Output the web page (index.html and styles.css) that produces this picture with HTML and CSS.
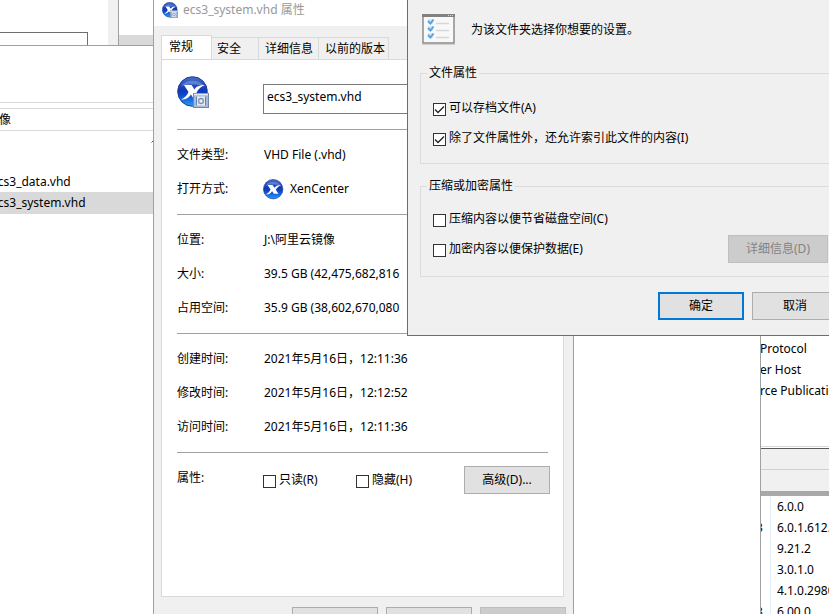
FILE: index.html
```html
<!DOCTYPE html>
<html lang="zh-CN">
<head>
  <meta charset="UTF-8" />
  <meta name="viewport" content="width=device-width, initial-scale=1.0"/>
  <title>ecs3_system.vhd 属性</title>
  <link rel="stylesheet" href="styles.css">
</head>
<body>
  <svg width="0" height="0" class="defs" aria-hidden="true">
    <defs>
      <linearGradient id="ball" x1="0" y1="0" x2="0" y2="1">
        <stop offset="0" stop-color="#4a6fc8"/>
        <stop offset="0.45" stop-color="#1238b4"/>
        <stop offset="0.6" stop-color="#0c46cc"/>
        <stop offset="1" stop-color="#2b9cf4"/>
      </linearGradient>
      <symbol id="xen" viewBox="0 0 32 32">
        <circle cx="15.500" cy="15.500" r="14.800" fill="url(#ball)" stroke="#1c3c94" stroke-width="1"/>
        <path d="M4 10C9 3 22 3 27 10C20 8 11 8 4 10Z" fill="#7d9be0" opacity="0.6"/>
        <path d="M7 9h7.500l3 4.500C19 10.500 22 9 28 9c-4 1.500-6.500 4-8.500 7.500l4 6h-7l-2.500-4c-2 3-5 5-10 5c3.500-1.500 6-4 7.500-7.500z" fill="#fff"/>
      </symbol>
      <symbol id="xen-disk" viewBox="0 0 32 32">
        <use href="#xen" width="32" height="32"/>
        <rect x="16.500" y="17.500" width="15" height="14" fill="#a9bad8" stroke="#7386ad"/>
        <path d="M17 18.500h14" stroke="#e4ecf8" stroke-width="1.500"/>
        <rect x="19" y="20.500" width="10" height="9" fill="#e6edf7"/>
        <path d="M19.500 20.500v9M28.500 20.500v9" stroke="#5f84b8"/>
        <circle cx="24" cy="25" r="2.500" fill="none" stroke="#7d8ea8" stroke-width="1.300"/>
        <path d="M22 22v6M26 22v6" stroke="#a5b2c6" stroke-width="0.800"/>
      </symbol>
    </defs>
  </svg>

  <div class="desktop">
    <!-- windows at the back -->
    <div class="window back">
      <div class="back-pane"><div class="back-box"></div></div>
      <div class="back-strip"></div>
      <div class="back-list"></div>
    </div>

    <div class="window services">
      <ul class="service-list">
        <li>Protocol</li>
        <li>er Host</li>
        <li>rce Publication</li>
      </ul>
      <div class="status-bar"></div>
      <div class="tool-bar"></div>
      <table class="versions">
        <tr><td></td><td>6.0.0</td></tr>
        <tr><td>3</td><td>6.0.1.612.0</td></tr>
        <tr><td></td><td>9.21.2</td></tr>
        <tr><td></td><td>3.0.1.0</td></tr>
        <tr><td></td><td>4.1.0.2980</td></tr>
        <tr><td>3</td><td>6.00.0</td></tr>
      </table>
    </div>

    <div class="window explorer">
      <div class="ribbon"></div>
      <div class="address">阿里云镜像</div>
      <div class="list-head">
        <svg width="10" height="6" viewBox="0 0 10 6"><path d="M0.500 5.500L5 1L9.500 5.500" fill="none" stroke="#555"/></svg>
      </div>
      <ul class="files">
        <li>ecs3_data.vhd</li>
        <li class="selected">ecs3_system.vhd</li>
      </ul>
    </div>

    <!-- file properties -->
    <div class="window properties">
      <div class="title-bar">
        <svg width="16" height="16"><use href="#xen-disk" width="16" height="16"/></svg>
        <span>ecs3_system.vhd 属性</span>
      </div>
      <div class="tabs">
        <button class="tab active">常规</button>
        <button class="tab short">安全</button>
        <button class="tab">详细信息</button>
        <button class="tab">以前的版本</button>
      </div>
      <div class="panel">
        <div class="file-head">
          <svg width="32" height="32"><use href="#xen-disk" width="32" height="32"/></svg>
          <input type="text" class="file-name" aria-label="文件名" value="ecs3_system.vhd">
        </div>
        <dl class="rows">
          <dt>文件类型:</dt><dd>VHD File (.vhd)</dd>
          <dt>打开方式:</dt>
          <dd class="app"><svg width="21" height="21"><use href="#xen" width="21" height="21"/></svg>XenCenter</dd>
        </dl>
        <dl class="rows">
          <dt>位置:</dt><dd>J:\阿里云镜像</dd>
          <dt>大小:</dt><dd>39.5 GB (42,475,682,816</dd>
          <dt>占用空间:</dt><dd>35.9 GB (38,602,670,080</dd>
        </dl>
        <dl class="rows last">
          <dt>创建时间:</dt><dd>2021年5月16日，12:11:36</dd>
          <dt>修改时间:</dt><dd>2021年5月16日，12:12:52</dd>
          <dt>访问时间:</dt><dd>2021年5月16日，12:11:36</dd>
        </dl>
        <div class="attributes">
          <span class="attr-title">属性:</span>
          <label class="check"><input type="checkbox">只读(R)</label>
          <label class="check"><input type="checkbox">隐藏(H)</label>
          <button class="btn">高级(D)...</button>
        </div>
      </div>
      <div class="footer">
        <button class="btn" aria-label="确定"></button>
        <button class="btn" aria-label="取消"></button>
        <button class="btn" aria-label="应用" disabled></button>
      </div>
    </div>

    <!-- advanced attributes -->
    <div class="window dialog">
      <div class="dialog-head">
        <svg width="34" height="31" viewBox="0 0 34 31">
          <rect x="1" y="1" width="31" height="28" fill="#f8f8f8" stroke="#8c8c8c" stroke-width="1.500"/>
          <path d="M0 1.500h33" stroke="#808080" stroke-width="3"/>
          <path d="M26 1.500h1M28 1.500h1M30 1.500h1" stroke="#ddd"/>
          <path d="M0 30.500h33" stroke="#cfcfcf"/>
          <path d="M6 5h5v5h-5zM6 12h5v5h-5zM6 19h5v5h-5z" fill="#d5e6f6"/>
          <path d="M6 7l2.500 2.500L11.500 5.500M6 14l2.500 2.500L11.500 12.500M6 21l2.500 2.500L11.500 19.500" fill="none" stroke="#5aa3e2" stroke-width="2"/>
          <path d="M14 9.500h13M14 16.500h13M14 23.500h13" stroke="#d6d6d6" stroke-width="1.500"/>
        </svg>
        <span>为该文件夹选择你想要的设置。</span>
      </div>
      <fieldset>
        <legend>文件属性</legend>
        <div class="option"><label class="check"><input type="checkbox" checked>可以存档文件(A)</label></div>
        <div class="option"><label class="check"><input type="checkbox" checked>除了文件属性外，还允许索引此文件的内容(I)</label></div>
      </fieldset>
      <fieldset class="compress">
        <legend>压缩或加密属性</legend>
        <div class="option"><label class="check"><input type="checkbox">压缩内容以便节省磁盘空间(C)</label></div>
        <div class="option">
          <label class="check"><input type="checkbox">加密内容以便保护数据(E)</label>
          <button class="btn details" disabled>详细信息(D)</button>
        </div>
      </fieldset>
      <div class="dialog-buttons">
        <button class="btn primary">确定</button>
        <button class="btn">取消</button>
      </div>
    </div>
  </div>
</body>
</html>
```

FILE: styles.css
```css
* {
  box-sizing: border-box;
}

body {
  margin: 0;
  font-family: "Noto Sans", "Noto Sans CJK SC", sans-serif;
  font-size: 12px;
  line-height: 20px;
  color: #000;
  background: #fff;
}

button,
input {
  font: inherit;
  color: inherit;
  margin: 0;
}

ul {
  list-style: none;
  margin: 0;
  padding: 0;
}

svg {
  display: block;
  flex: none;
}

.defs {
  position: absolute;
}

.desktop {
  position: relative;
  height: 100vh;
  overflow: hidden;
}

.window {
  position: absolute;
  white-space: nowrap;
}

/* back window */
.back {
  top: 0;
  left: 0;
  right: 0;
  height: 45px;
  display: flex;
}

.back-pane {
  width: 108px;
  padding-top: 32px;
}

.back-box {
  width: 88px;
  height: 100%;
  border: 1px solid #6e6e6e;
  border-width: 1px 1px 0 0;
}

.back-strip {
  width: 11px;
  background: #f0f0f0;
  border-right: 1px solid #a0a0a0;
}

.back-list {
  flex: 1;
  border-bottom: 10px solid #d9d9d9;
}

/* services window */
.services {
  top: 336px;
  right: 0;
  bottom: 0;
  width: 129px;
  overflow: hidden;
}

.service-list {
  height: 111px;
  padding: 2px 0 0 60px;
  border-bottom: 1px solid #d9d9d9;
}

.service-list li {
  line-height: 21px;
}

.status-bar {
  height: 22px;
  margin-top: 1px;
  background: #f0f0f0;
  border-top: 1px solid #5a5a5a;
  border-bottom: 1px solid #d0d0d0;
}

.tool-bar {
  height: 26px;
  background: #f0f0f0;
  border-bottom: 5px solid #a8a8a8;
}

.versions {
  border-collapse: collapse;
}

.versions td {
  height: 21px;
  line-height: 21px;
  padding: 0 0 0 6px;
}

.versions td:first-child {
  width: 70px;
  padding: 0 7px 0 56px;
  border-right: 1px solid #e5effb;
}

/* explorer */
.explorer {
  top: 45px;
  left: -60px;
  right: 68px;
  bottom: 0;
  background: #fff;
  border: 1px solid #a0a0a0;
  border-bottom: none;
}

.ribbon {
  height: 57px;
  border-bottom: 1px solid #d9d9d9;
}

.address {
  height: 23px;
  margin-top: 5px;
  padding-left: 9px;
  line-height: 21px;
  border: 1px solid #d9d9d9;
}

.list-head {
  height: 40px;
  padding: 6px 0 0 210px;
}

.files li {
  height: 21px;
  line-height: 21px;
  padding-left: 50px;
}

.files .selected {
  height: 22px;
  background: #d9d9d9;
}

/* properties window */
.properties {
  top: -5px;
  bottom: -33px;
  left: 153px;
  width: 421px;
  display: flex;
  flex-direction: column;
  background: #f0f0f0;
  border: 1px solid #a0a0a0;
}

.title-bar {
  display: flex;
  align-items: center;
  gap: 5px;
  height: 30px;
  padding: 0 8px 2px;
  color: #999;
  background: #fff;
}

.tabs {
  display: flex;
  align-items: flex-end;
  margin: 9px 7px -1px;
}

.tab {
  height: 23px;
  padding: 0 3px 0 6px;
  text-align: left;
  background: #f0f0f0;
  border: 1px solid #d9d9d9;
  border-left: none;
}

.tab.short {
  width: 47px;
  padding-left: 5px;
}

.tab:nth-child(3) {
  width: 60px;
}

.tab:nth-child(4) {
  width: 70px;
}

.tab.active {
  width: 51px;
  height: 25px;
  padding: 0 0 2px 7px;
  background: #fff;
  border-left: 1px solid #d9d9d9;
  border-bottom: none;
}

.panel {
  flex: 1;
  margin: 0 9px 0 7px;
  padding: 16px 15px 0;
  background: #fff;
  border: 1px solid #d9d9d9;
}

.file-head {
  display: flex;
  height: 53px;
}

.file-name {
  flex: 1;
  height: 30px;
  margin: 8px 0 0 54px;
  padding: 0 3px 6px;
  background: #fff;
  border: 1px solid #7a7a7a;
  outline: none;
}

.rows {
  display: grid;
  grid-template-columns: 87px 1fr;
  grid-auto-rows: 34px;
  align-items: center;
  margin: 0;
  padding: 8px 0;
  border-top: 1px solid #a0a0a0;
}

.rows.last {
  border-bottom: 1px solid #a0a0a0;
}

.rows dd {
  margin: 0;
}

.rows .app {
  display: flex;
  align-items: center;
  gap: 6px;
  margin-left: -1px;
}

.attributes {
  display: flex;
  align-items: center;
  margin-right: -2px;
  padding-top: 13px;
}

.attr-title {
  width: 86px;
  padding-bottom: 4px;
}

.attributes .check {
  width: 93px;
}

.attributes .btn {
  margin-left: auto;
}

.footer {
  display: flex;
  justify-content: flex-end;
  gap: 8px;
  padding: 10px 7px 11px;
}

/* controls */
.btn {
  width: 86px;
  height: 28px;
  padding: 0;
  background: #e1e1e1;
  border: 1px solid #adadad;
}

.btn:disabled {
  color: #838383;
  background: #ccc;
  border-color: #bfbfbf;
}

.btn.primary {
  border: 2px solid #0078d7;
}

.check {
  display: flex;
  align-items: center;
  gap: 3px;
}

.check input {
  appearance: none;
  flex: none;
  width: 13px;
  height: 13px;
  margin-top: 2px;
  background: #fff;
  border: 1px solid #333;
}

.check input:checked {
  background: #fff url("data:image/svg+xml,%3Csvg xmlns='http://www.w3.org/2000/svg' viewBox='0 0 11 11'%3E%3Cpath d='M1 5.500L4 8.500L10 2.500' fill='none' stroke='%23222' stroke-width='1.300'/%3E%3C/svg%3E");
}

/* advanced attributes dialog */
.dialog {
  top: 0;
  left: 407px;
  right: -22px;
  padding: 14px 12px 15px;
  background: #f0f0f0;
  border: 1px solid #1883d7;
  border-top: none;
}

.dialog-head {
  display: flex;
  align-items: center;
  gap: 15px;
  height: 31px;
  margin: 0 0 18px 2px;
}

fieldset {
  min-width: 0;
  margin: 0 0 12px;
  padding: 10px 9px 10px 12px;
  border: 1px solid #dcdcdc;
}

.compress {
  padding-top: 8px;
  padding-bottom: 12px;
}

legend {
  margin-left: -6px;
  padding: 0 2px;
}

.option {
  display: flex;
  align-items: center;
  justify-content: space-between;
  height: 30px;
}

.details {
  width: 100px;
}

.dialog-buttons {
  display: flex;
  justify-content: flex-end;
  gap: 8px;
  padding-top: 3px;
}
```
